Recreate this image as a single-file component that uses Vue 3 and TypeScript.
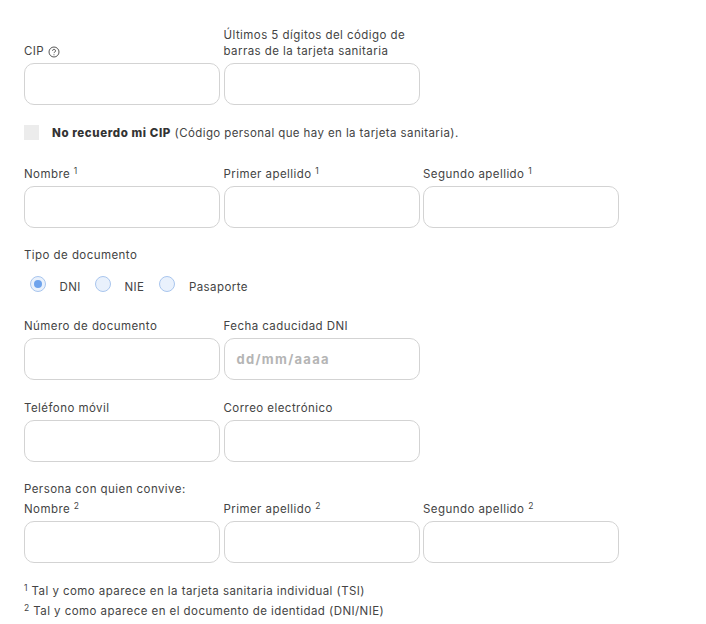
<script setup lang="ts">
const row2 = ['Nombre', 'Primer apellido', 'Segundo apellido']
</script>

<template>
  <form class="page">
    <div class="fields r1">
      <div class="field">
        <label class="lab">CIP
          <svg class="help" viewBox="0 0 12 12" width="12" height="12">
            <circle cx="6" cy="6" r="5" fill="none" stroke="#444" stroke-width="0.9" />
            <path d="M4.6 4.8a1.45 1.45 0 1 1 2.2 1.2c-.5.3-.8.6-.8 1.1" fill="none" stroke="#444" stroke-width="0.9" />
            <circle cx="6" cy="8.8" r="0.55" fill="#444" />
          </svg>
        </label>
        <div class="box"></div>
      </div>
      <div class="field">
        <label class="lab">Últimos 5 dígitos del código de<br />barras de la tarjeta sanitaria</label>
        <div class="box"></div>
      </div>
    </div>

    <div class="check">
      <span class="square"></span>
      <span class="check-text"><b>No recuerdo mi CIP</b> (Código personal que hay en la tarjeta sanitaria).</span>
    </div>

    <div class="fields r2">
      <div v-for="n in row2" :key="n" class="field">
        <label class="lab">{{ n }} <sup>1</sup></label>
        <div class="box"></div>
      </div>
    </div>

    <div class="plain tipo">Tipo de documento</div>
    <div class="radios">
      <span class="radio on"><i></i></span><span class="rlab dni">DNI</span>
      <span class="radio"></span><span class="rlab nie">NIE</span>
      <span class="radio"></span><span class="rlab pas">Pasaporte</span>
    </div>

    <div class="fields r4">
      <div class="field">
        <label class="lab">Número de documento</label>
        <div class="box"></div>
      </div>
      <div class="field">
        <label class="lab">Fecha caducidad DNI</label>
        <div class="box ph">dd/mm/aaaa</div>
      </div>
    </div>

    <div class="fields r5">
      <div class="field">
        <label class="lab">Teléfono móvil</label>
        <div class="box"></div>
      </div>
      <div class="field">
        <label class="lab">Correo electrónico</label>
        <div class="box"></div>
      </div>
    </div>

    <div class="plain persona">Persona con quien convive:</div>
    <div class="fields r6">
      <div v-for="n in row2" :key="n" class="field">
        <label class="lab">{{ n }} <sup>2</sup></label>
        <div class="box"></div>
      </div>
    </div>

    <p class="foot first"><sup>1</sup> Tal y como aparece en la tarjeta sanitaria individual (TSI)</p>
    <p class="foot"><sup>2</sup> Tal y como aparece en el documento de identidad (DNI/NIE)</p>
  </form>
</template>

<style>
html, body { margin: 0; background: #fff; }
</style>

<style scoped>
.page {
  width: 706px;
  height: 624px;
  box-sizing: border-box;
  padding: 27px 0 0 24px;
  overflow: hidden;
  font-family: Inter, "Noto Sans", sans-serif;
  font-size: 11.5px;
  letter-spacing: 0.44px;
  color: #444;
}
.fields {
  display: grid;
  grid-template-columns: repeat(3, 196px);
  column-gap: 3.5px;
}
.field {
  display: flex;
  flex-direction: column;
  justify-content: flex-end;
}
.lab {
  display: block;
  line-height: 16px;
  margin-bottom: 4px;
}
.lab sup, .foot sup {
  font-size: 8.5px;
  line-height: 0;
  vertical-align: 4.5px;
}
.help { vertical-align: -2.5px; }
.box {
  box-sizing: border-box;
  height: 42px;
  border: 1px solid #d3d3d3;
  border-radius: 10px;
  background: #fff;
}
.ph {
  display: flex;
  align-items: center;
  padding-left: 12px;
  font-size: 13px;
  font-weight: 700;
  letter-spacing: 1.3px;
  color: #b5b5b5;
}
.check {
  display: flex;
  align-items: center;
  margin-top: 20px;
  height: 15px;
}
.square {
  width: 15px;
  height: 15px;
  background: #ececec;
  margin-right: 13px;
}
.check-text { letter-spacing: 0.4px; }
.check-text b { font-weight: 800; letter-spacing: 0.6px; color: #333; }
.r2 { margin-top: 26px; }
.tipo { margin-top: 19px; }
.plain { line-height: 16px; }
.radios {
  display: flex;
  align-items: center;
  margin-top: 13px;
  height: 18px;
  padding-left: 6px;
}
.radio {
  box-sizing: border-box;
  width: 16px;
  height: 16px;
  border-radius: 50%;
  border: 1px solid #a9c6ee;
  background: #e9f1fc;
  display: flex;
  align-items: center;
  justify-content: center;
  margin-top: -2px;
}
.radio i {
  display: block;
  width: 8px;
  height: 8px;
  border-radius: 50%;
  background: #6ea3ec;
}
.rlab { margin-left: 13.5px; margin-top: 4px; }
.dni { margin-right: 14px; }
.nie { margin-right: 14.5px; }
.pas { margin-left: 14px; }
.r4 { margin-top: 24px; }
.r5 { margin-top: 20px; }
.persona { margin-top: 19px; }
.r6 { margin-top: 4px; }
.foot {
  margin: 0;
  line-height: 20px;
}
.first { margin-top: 18px; }
</style>
